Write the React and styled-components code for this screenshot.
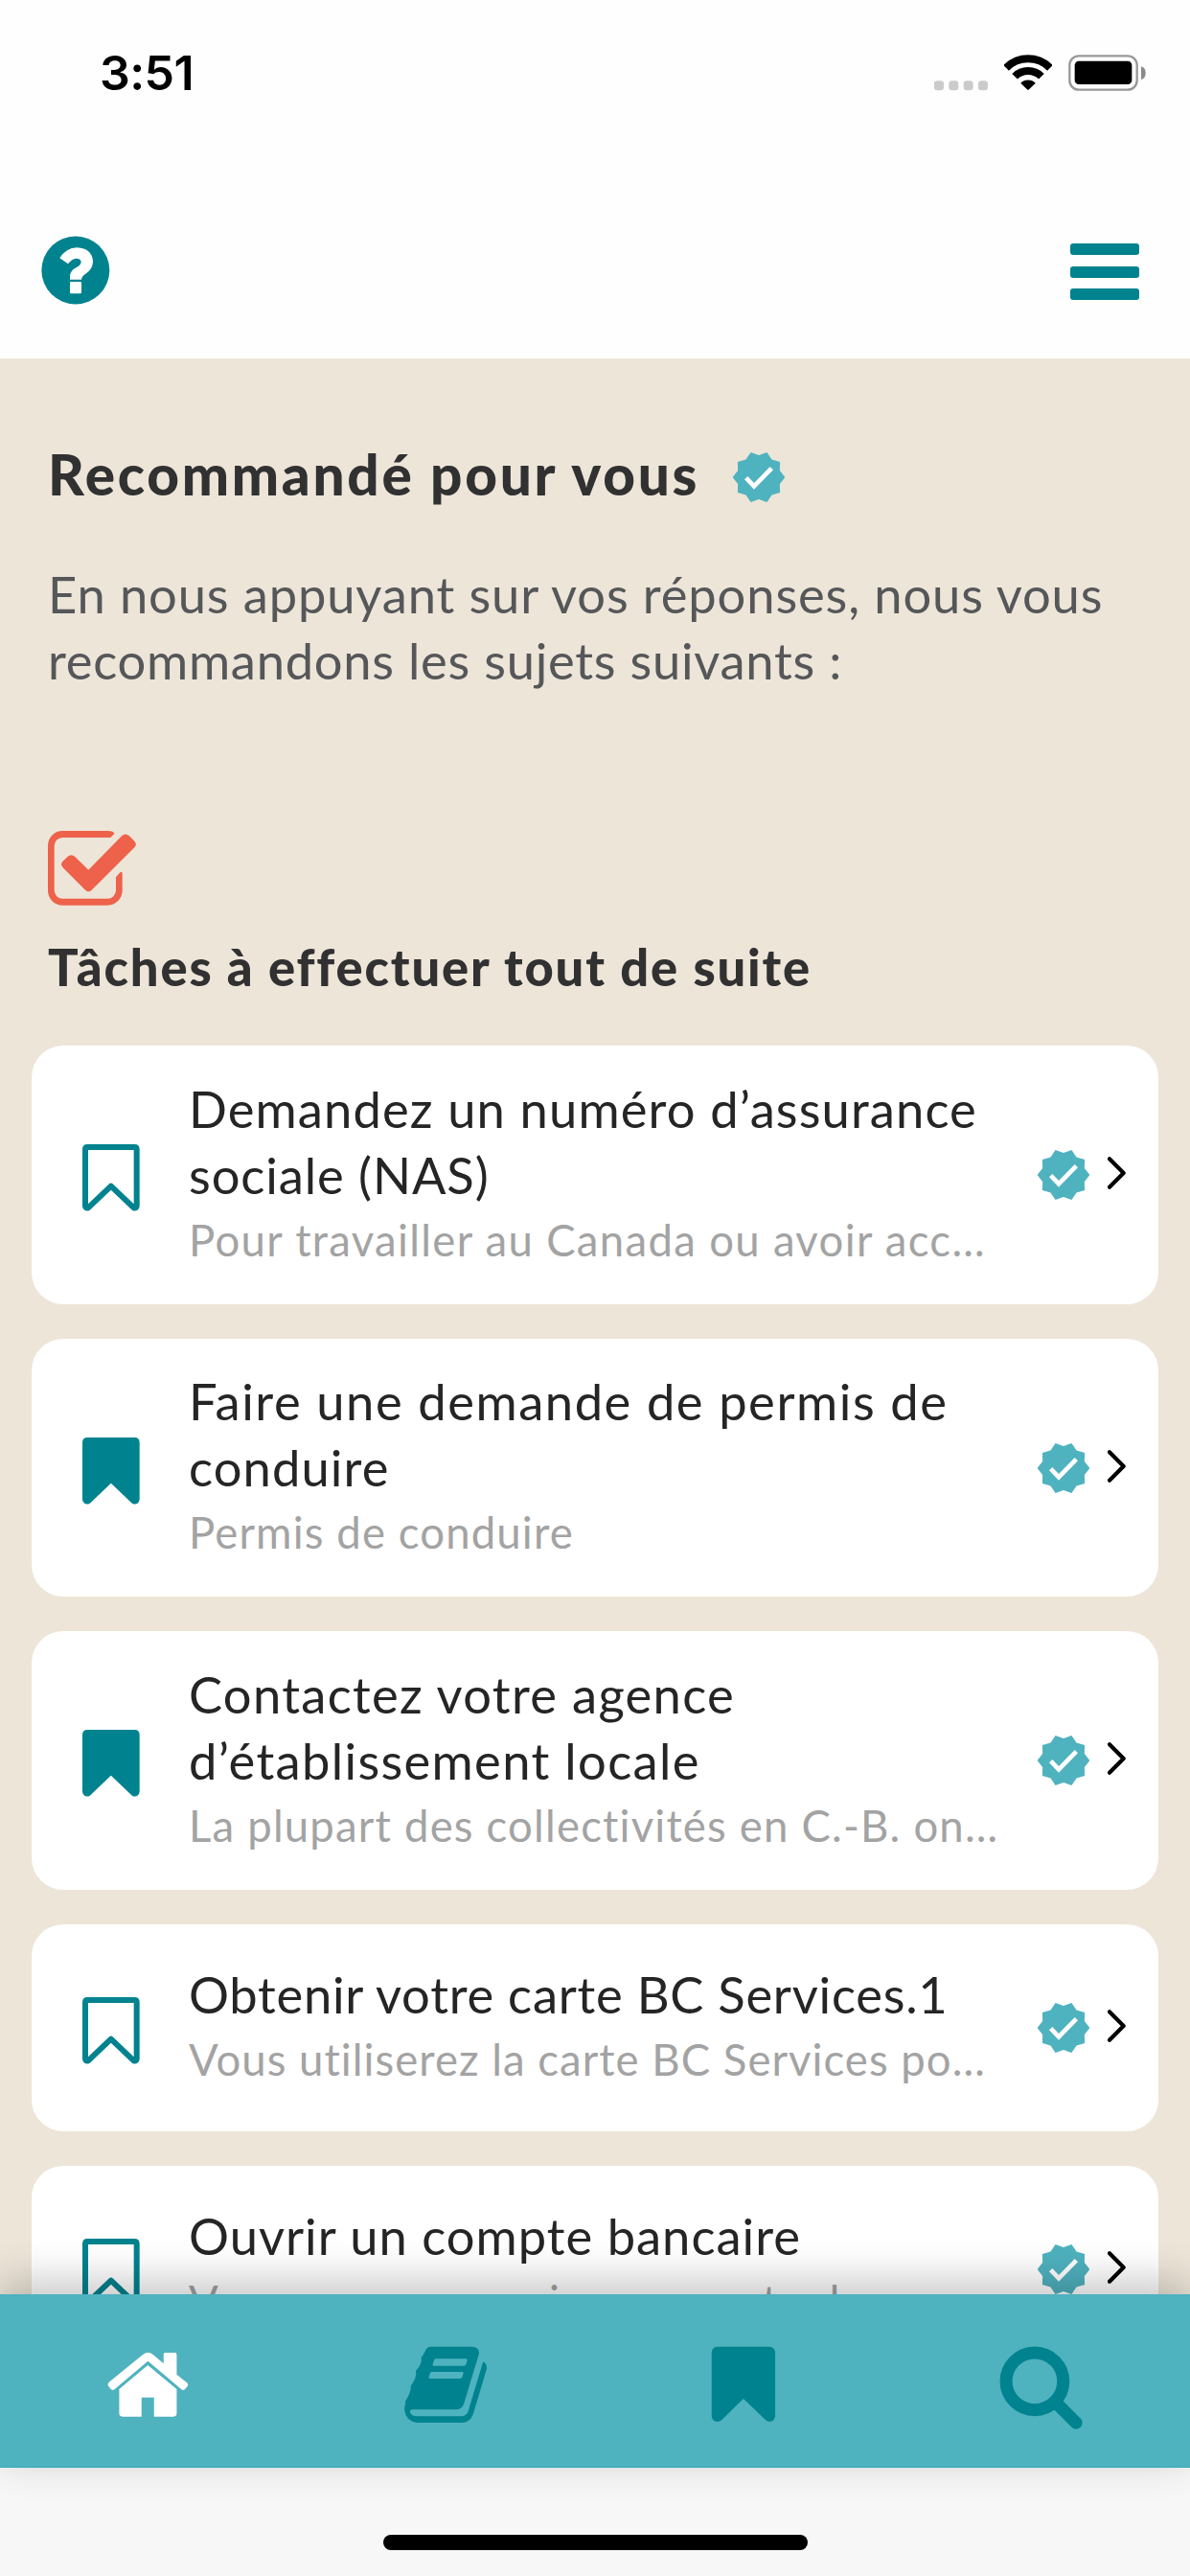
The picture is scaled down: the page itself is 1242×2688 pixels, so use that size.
import React from "react";
import styled, { createGlobalStyle } from "styled-components";

const TEAL = "#00838f";
const AQUA = "#4fb2bf";

const GlobalStyle = createGlobalStyle`
  * { box-sizing: border-box; }
  body { margin: 0; background: #f7f7f7; }
  svg { display: block; flex: none; }
  h1, h2, h3, p { margin: 0; font-weight: 400; }
`;

const Screen = styled.div`
  width: 1242px;
  height: 2688px;
  display: flex;
  flex-direction: column;
  overflow: hidden;
  background: #ede5d8;
  font-family: Lato, "Noto Sans", sans-serif;
`;

const Header = styled.header`
  height: 374px;
  flex: none;
  background: #fefefe;
  display: flex;
  flex-direction: column;
`;

const StatusBar = styled.div`
  height: 152px;
  display: flex;
  align-items: center;
  justify-content: space-between;
  padding: 0 45px 0 104px;
`;

const Clock = styled.time`
  font: 600 50px/60px Inter, sans-serif;
  letter-spacing: ${(p) => p.$track}px;
  color: #000;
`;

const StatusIcons = styled.div`
  display: flex;
  align-items: flex-end;
  gap: 17px;
`;

const Toolbar = styled.div`
  flex: 1;
  display: flex;
  justify-content: space-between;
  align-items: flex-start;
  padding: 94px 53px 0 43px;
`;

const MenuIcon = styled.div`
  width: 72px;
  padding-top: 8px;
  display: flex;
  flex-direction: column;
  gap: 11.6px;
`;

const MenuBar = styled.span`
  height: 12px;
  border-radius: 3px;
  background: ${TEAL};
`;

const Content = styled.main`
  flex: 1;
  min-height: 0;
  overflow: hidden;
  padding: 86px 33px 0;
`;

const Intro = styled.section`
  padding: 0 0 0 17px;
`;

const TitleRow = styled.div`
  height: 76px;
  display: flex;
  align-items: center;
  gap: 35px;
`;

const PageTitle = styled.h1`
  padding-bottom: 8px;
  font-size: 58.5px;
  line-height: 68px;
  font-weight: 900;
  letter-spacing: ${(p) => p.$track}px;
  color: #313132;
  white-space: nowrap;
`;

const Lead = styled.p`
  margin-top: 49px;
  font-size: 52.5px;
  line-height: 69px;
  color: #555759;
  white-space: nowrap;
`;

const Line = styled.span`
  display: block;
  letter-spacing: ${(p) => p.$track}px;
`;

const SectionHead = styled.div`
  margin-top: 144px;
`;

const SectionTitle = styled.h2`
  margin-top: 29px;
  font-size: 52.5px;
  line-height: 69px;
  font-weight: 900;
  letter-spacing: ${(p) => p.$track}px;
  color: #313132;
  white-space: nowrap;
`;

const TaskList = styled.div`
  margin-top: 48px;
  display: flex;
  flex-direction: column;
  gap: 36px;
`;

const Card = styled.article`
  min-height: 216px;
  padding: 27.5px 33px 34px 53px;
  border-radius: 33px;
  background: #fff;
  display: flex;
  align-items: center;
`;

const BookmarkSlot = styled.div`
  padding-top: 13px;
  margin-right: 51px;
`;

const CardText = styled.div`
  flex: 1;
  min-width: 0;
  padding-top: 3px;
`;

const CardTitle = styled.h3`
  font-size: 52.5px;
  line-height: 69px;
  color: #252526;
  white-space: nowrap;
`;

const CardSub = styled.p`
  font-size: 45.5px;
  line-height: 67px;
  letter-spacing: ${(p) => p.$track}px;
  color: #a3a3a3;
  white-space: nowrap;
`;

const CardTrail = styled.div`
  display: flex;
  align-items: center;
  gap: 19px;
  padding-top: 7px;
`;

const ChevronSlot = styled.div`
  padding-bottom: 4px;
`;

const TabBar = styled.nav`
  position: relative;
  z-index: 1;
  height: 181px;
  flex: none;
  display: grid;
  grid-template-columns: repeat(4, 1fr);
  justify-items: center;
  padding-top: 54px;
  background: ${AQUA};
  border-bottom: 1px solid #2eacba;
  box-shadow: 0 -12px 42px rgba(0, 0, 0, 0.24);
`;

const SafeArea = styled.div`
  height: 113px;
  flex: none;
  display: flex;
  justify-content: center;
  padding-top: 70px;
  background: #f7f7f7;
`;

const HomeIndicator = styled.div`
  width: 443px;
  height: 16px;
  border-radius: 8px;
  background: #000;
`;

function SignalDots() {
  return (
    <svg width="56" height="38" viewBox="102 50 168 114" fill="#cbcbcb">
      {[102, 148, 194, 240].map((x) => (
        <rect key={x} x={x} y="132" width="30" height="30" rx="10" />
      ))}
    </svg>
  );
}

function Wifi() {
  return (
    <svg width="50" height="38" viewBox="321 50 150 114">
      <g fill="none" stroke="#000" strokeWidth="24">
        <path d="M327.400 91.400 A97 97 0 0 1 464.600 91.400" />
        <path d="M354.300 118.300 A59 59 0 0 1 437.700 118.300" />
      </g>
      <path d="M372.700 139 A33 33 0 0 1 419.300 139 L399 159 Q396 162 393 159 Z" />
    </svg>
  );
}

function Battery() {
  return (
    <svg width="82" height="38" viewBox="522 51 246 114">
      <rect x="526" y="55" width="211" height="106" rx="29" fill="none" stroke="#999" strokeWidth="7" />
      <rect x="542" y="71" width="179" height="73" rx="13" />
      <path d="M750 88 Q764 92 764 108.500 Q764 125 750 129 Z" fill="#8a8a8a" />
    </svg>
  );
}

function HelpIcon() {
  return (
    <svg width="72" height="72" viewBox="38 46 216 216">
      <circle cx="145.500" cy="154" r="106.500" fill={TEAL} />
      <path
        fill="#fff"
        d="M96 116 Q116 84 150 83 Q198 86 200 127 Q199 152 177 165 Q165 172 164 183 H128 V174 Q128 156 147 146 Q163 138 163 127 Q161 117 147 117 Q135 118 122 134 Z"
      />
      <rect x="128" y="190" width="36" height="37" rx="4" fill="#fff" />
    </svg>
  );
}

const badgePoints = Array.from({ length: 20 }, (_, i) => {
  const r = i % 2 ? 69 : 82;
  const a = (i * Math.PI) / 10;
  return `${(r * Math.cos(a)).toFixed(1)},${(r * Math.sin(a)).toFixed(1)}`;
}).join(" ");

function VerifiedBadge() {
  return (
    <svg width="54" height="54" viewBox="-81 -81 162 162">
      <polygon points={badgePoints} fill={AQUA} />
      <polyline points="-40,2 -15,28 40,-28" fill="none" stroke="#fff" strokeWidth="14" />
    </svg>
  );
}

function TaskIcon() {
  return (
    <svg width="93" height="78" viewBox="60 83 279 234" fill="#ee614a">
      <path d="M248 83 Q266 83 268 92 L256 104 H106 A26 26 0 0 0 80 130 V269 A26 26 0 0 0 106 295 H247 A26 26 0 0 0 273 269 V228 L287 212 Q293 210 293 217 V269 A46 47 0 0 1 247 316 H106 A46 46 0 0 1 60 270 V129 A46 46 0 0 1 106 83 Z" />
      <path d="M187 205 L292 98 Q303 89 314 98 L331 115 Q340 125 331 135 L197 268 Q187 277 177 268 L106 197 Q98 188 106 179 L122 163 Q133 154 144 163 Z" />
    </svg>
  );
}

function CardBookmark({ saved }) {
  return (
    <svg width="60" height="70" viewBox="168 1062 180 210">
      <path
        d="M184 1071 H331 Q338 1071 338 1078 V1255 Q337 1264 329 1261 L257.500 1193 L186 1261 Q178 1264 177 1255 V1078 Q177 1071 184 1071 Z"
        fill={saved ? TEAL : "none"}
        stroke={TEAL}
        strokeWidth="18"
        strokeLinejoin="round"
      />
    </svg>
  );
}

function Chevron() {
  return (
    <svg width="20" height="34" viewBox="347 171 60 102">
      <path d="M353 178 L397 222 L353 266" fill="none" stroke="#000" strokeWidth="12.500" strokeLinecap="round" strokeLinejoin="round" />
    </svg>
  );
}

function TabIcon({ x, color, children }) {
  return (
    <svg width="88" height="88" viewBox={`${x} 144 264 264`} fill={color}>
      {children}
    </svg>
  );
}

const tasks = [
  {
    title: [["Demandez un numéro d’assurance", 1.12], ["sociale (NAS)", 0.9]],
    sub: ["Pour travailler au Canada ou avoir acc…", 1.32],
    saved: false,
  },
  {
    title: [["Faire une demande de permis de", 1.56], ["conduire", 1.1]],
    sub: ["Permis de conduire", 1.13],
    saved: true,
  },
  {
    title: [["Contactez votre agence", 1.3], ["d’établissement locale", 1.33]],
    sub: ["La plupart des collectivités en C.-B. on…", 1.19],
    saved: true,
  },
  {
    title: [["Obtenir votre carte BC Services.1", 0.74]],
    sub: ["Vous utiliserez la carte BC Services po…", 1.03],
    saved: false,
  },
  {
    title: [["Ouvrir un compte bancaire", 1]],
    sub: ["Vous pouvez ouvrir un compte dans une…", 1.2],
    saved: false,
  },
];

function TaskCard({ title, sub, saved }) {
  return (
    <Card>
      <BookmarkSlot>
        <CardBookmark saved={saved} />
      </BookmarkSlot>
      <CardText>
        <CardTitle>
          {title.map(([text, track]) => (
            <Line key={text} $track={track}>{text}</Line>
          ))}
        </CardTitle>
        <CardSub $track={sub[1]}>{sub[0]}</CardSub>
      </CardText>
      <CardTrail>
        <VerifiedBadge />
        <ChevronSlot>
          <Chevron />
        </ChevronSlot>
      </CardTrail>
    </Card>
  );
}

export default function App() {
  return (
    <>
      <GlobalStyle />
      <Screen>
        <Header>
          <StatusBar>
            <Clock $track={-0.6}>3:51</Clock>
            <StatusIcons>
              <SignalDots />
              <Wifi />
              <Battery />
            </StatusIcons>
          </StatusBar>
          <Toolbar>
            <HelpIcon />
            <MenuIcon>
              <MenuBar />
              <MenuBar />
              <MenuBar />
            </MenuIcon>
          </Toolbar>
        </Header>
        <Content>
          <Intro>
            <TitleRow>
              <PageTitle $track={2.7}>Recommandé pour vous</PageTitle>
              <VerifiedBadge />
            </TitleRow>
            <Lead>
              <Line $track={0.86}>En nous appuyant sur vos réponses, nous vous</Line>
              <Line $track={0.73}>recommandons les sujets suivants :</Line>
            </Lead>
            <SectionHead>
              <TaskIcon />
              <SectionTitle $track={1.86}>Tâches à effectuer tout de suite</SectionTitle>
            </SectionHead>
          </Intro>
          <TaskList>
            {tasks.map((task) => (
              <TaskCard key={task.sub[0]} {...task} />
            ))}
          </TaskList>
        </Content>
        <TabBar>
          <TabIcon x={153.75} color="#fff">
            <path d="M283.500 204 L374 279 V355 Q374 365 364 365 H303 V305 H264 V365 H204 Q194 365 194 355 V279 Z" />
            <path d="M284 191 L180 279 Q174 285 168 279 L160 269 Q156 263 162 257 L269 170 Q284 159 299 170 L333 199 V170 Q333 165 338 165 H369 Q374 165 374 170 V233 L406 259 Q412 264 408 270 L400 279 Q394 285 388 279 Z" />
          </TabIcon>
          <TabIcon x={1085.25} color={TEAL}>
            <path
              fillRule="evenodd"
              d="M1167 146 H1299 Q1324 149 1318 172 L1272 324 Q1266 343 1246 343 H1110 Q1101 345 1103 351 Q1108 364 1126 364 H1266 Q1280 363 1285 349 L1332 193 Q1345 200 1343 216 L1301 356 Q1292 382 1268 384 H1126 Q1090 380 1086 346 Q1085 332 1089 326 L1088 318 Q1102 296 1105 280 L1106 268 Q1119 252 1122 232 L1121 222 Q1136 206 1139 189 L1138 180 Q1146 172 1152 157 Q1157 146 1167 146 Z M1184 184 H1278 Q1283 184 1282 189 L1279 200 Q1277 206 1271 206 H1178 Q1173 206 1174 201 L1178 190 Q1180 184 1184 184 Z M1172 225 H1266 Q1271 225 1270 230 L1267 240 Q1265 246 1259 246 H1166 Q1161 246 1162 241 L1165 231 Q1167 225 1172 225 Z"
            />
          </TabIcon>
          <TabIcon x={96.75} color={TEAL}>
            <path d="M147 146 H309 Q327 147 328 164 V362 Q327 380 310 381 Q302 380 298 376 L228.500 309 L160 376 Q154 381 147 381 Q130 380 129 362 V164 Q130 147 147 146 Z" />
          </TabIcon>
          <TabIcon x={1028.25} color={TEAL}>
            <circle cx="1139" cy="254.500" r="89.500" fill="none" stroke={TEAL} strokeWidth="39" />
            <path d="M1210 326 L1268.500 384.500" stroke={TEAL} strokeWidth="39" strokeLinecap="round" />
          </TabIcon>
        </TabBar>
        <SafeArea>
          <HomeIndicator />
        </SafeArea>
      </Screen>
    </>
  );
}
